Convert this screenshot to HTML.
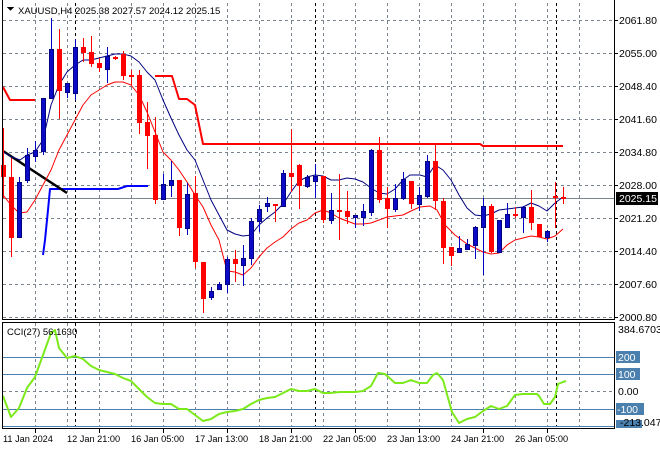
<!DOCTYPE html>
<html><head><meta charset="utf-8"><style>
html,body{margin:0;padding:0;background:#fff;width:660px;height:450px;overflow:hidden}
svg{display:block}
text{font-family:"Liberation Sans",sans-serif;font-size:10.5px;fill:#000}
.s{font-size:9.5px}
.t{font-size:9.2px}
</style></head><body>
<svg width="660" height="450" viewBox="0 0 660 450" xmlns="http://www.w3.org/2000/svg" shape-rendering="crispEdges">
<rect width="660" height="450" fill="#fff"/>
<g stroke="#7a8591" stroke-width="1" stroke-dasharray="3,3">
<path d="M3 20.5H614M3 53.5H614M3 86.5H614M3 119.5H614M3 152.5H614M3 185.5H614M3 218.5H614M3 251.5H614M3 284.5H614M3 317.5H614M3 391.5H614"/>
<path d="M35.5 3V319M67.5 3V319M99.5 3V319M131.5 3V319M163.5 3V319M195.5 3V319M227.5 3V319M259.5 3V319M291.5 3V319M323.5 3V319M355.5 3V319M387.5 3V319M419.5 3V319M451.5 3V319M483.5 3V319M515.5 3V319M547.5 3V319M579.5 3V319"/>
<path d="M35.5 323V427M67.5 323V427M99.5 323V427M131.5 323V427M163.5 323V427M195.5 323V427M227.5 323V427M259.5 323V427M291.5 323V427M323.5 323V427M355.5 323V427M387.5 323V427M419.5 323V427M451.5 323V427M483.5 323V427M515.5 323V427M547.5 323V427M579.5 323V427"/>
</g>
<g stroke="#000" stroke-width="1" stroke-dasharray="3,3">
<path d="M75.5 3V319M315.5 3V319M556.5 3V319M75.5 323V427M315.5 323V427M556.5 323V427"/>
</g>
<path d="M3 198.5H614" stroke="#7a8591"/>
<g stroke="#4a7fae" stroke-width="1">
<path d="M3 357.5H614M3 374.5H614M3 409.5H614M3 426.5H614"/>
</g>
<g shape-rendering="auto" fill="none" stroke-linejoin="round">
<polyline points="3,87 10,100 35,100" stroke="#f00" stroke-width="2"/>
<polyline points="155,76 172,76 179,99 187,99 195,105 203,144 480,144 483,146 563,146" stroke="#f00" stroke-width="2"/>
<polyline points="43,255 45,240 48,210 50,189 118,189 127,186 148,186" stroke="#00f" stroke-width="2"/>
<polyline points="3,151 67,193" stroke="#000" stroke-width="2.5"/>
<polyline stroke="#000080" stroke-width="1" points="3,152 12,157 20,160 27,155 35,152 43,140 51,105 59,85 67,72 75,65 83,60 91,60 99,58 107,56 115,54 123,54 131,56 139,62 147,72 155,80 163,100 171,118 179,135 187,150 195,160 203,180 211,200 219,215 227,230 235,234 243,236 251,235 259,225 267,218 275,212 283,204 291,192 299,181 307,177 315,175 323,176 331,180 339,180 347,178 355,179 363,182 371,188 379,193 387,194 395,189 403,180 410,175 420,175 427,177 435,165 443,170 451,180 459,195 467,208 475,215 483,216 491,214 499,210 507,209 515,208 523,207 531,203 539,206 547,211 555,203 563,197"/>
<polyline stroke="#f00" stroke-width="1" points="3,195 11,205 19,213 27,212 35,200 43,185 51,170 59,150 67,135 75,120 83,105 91,95 99,90 107,85 115,82 123,82 131,85 139,95 147,112 155,132 163,152 171,160 179,170 187,182 195,195 203,207 211,225 219,240 227,271 235,272 243,275 251,268 259,257 267,248 275,242 283,237 291,229 299,223 307,220 315,213 323,210 331,213 339,218 347,221 355,224 363,224 371,223 379,220 387,217 395,216 403,215 411,211 420,207 430,206 437,210 445,225 455,235 467,244 475,248 483,252 491,254 499,253 507,245 515,240 523,238 531,236 539,237 547,239 555,236 563,229"/>
<polyline stroke="#7cea1a" stroke-width="2" points="3,396 11,417 19,408 27,388 35,377 43,355 51,333 55,330 59,348 67,358 75,356 83,359 91,366 99,370 107,372 115,374 123,378 131,381 139,389 147,397 155,403 163,404 171,404 179,409 187,409 195,415 203,421 211,419 219,414 227,412 235,411 243,409 251,404 259,400 267,398 275,397 283,393 291,389 299,391 307,391 315,389 323,393 330,393 340,392 355,392 363,391 371,386 378,373 385,374 395,383 403,383 411,380 419,383 427,383 433,375 437,373 443,380 448,398 452,412 459,423 467,419 475,417 483,411 491,406 499,409 507,406 515,395 523,394 537,394 539,396 544,404 550,404 555,397 558,384 563,382 566,381"/>
</g>
<path stroke="#f00" stroke-width="1" d="M3.5 128V198M11.5 158V257M59.5 29V119M83.5 38V62M91.5 36V67M99.5 58V72M115.5 56V60M123.5 51V80M131.5 70V85M139.5 70V134M147.5 102V169M155.5 117V204M179.5 180V236M195.5 176V268M203.5 262V313M235.5 250V282M275.5 204V222M291.5 129V192M299.5 164V209M323.5 176V223M339.5 174V240M347.5 191V224M379.5 137V203M387.5 187V228M411.5 181V209M435.5 144V210M443.5 198V264M451.5 247V266M491.5 204V253M515.5 207V218M531.5 190V230M539.5 224V237M555.5 182V228M563.5 187V204"/>
<path stroke="#0000c8" stroke-width="1" d="M19.5 177V238M27.5 148V183M35.5 141V162M43.5 98V155M51.5 18V98M67.5 83V98M75.5 39V100M107.5 47V83M163.5 174V199M171.5 161V197M187.5 183V235M211.5 287V300M219.5 282V290M227.5 257V293M243.5 245V286M251.5 218V265M259.5 205V232M267.5 197V212M283.5 170V206M307.5 175V188M315.5 164V198M331.5 193V224M355.5 215V228M363.5 204V226M371.5 149V216M395.5 184V212M403.5 172V200M419.5 187V211M427.5 155V198M459.5 236V253M467.5 239V250M475.5 226V259M483.5 198V275M499.5 220V252M507.5 203V228M523.5 206V233M547.5 230V242"/>
<g fill="#f00">
<rect x="1" y="165" width="5" height="12"/><rect x="9" y="177" width="5" height="61"/><rect x="57" y="49" width="5" height="42"/><rect x="81" y="47" width="5" height="6"/><rect x="89" y="52" width="5" height="12"/><rect x="97" y="63" width="5" height="5"/><rect x="113" y="57" width="5" height="2"/><rect x="121" y="54" width="5" height="22"/><rect x="129" y="75" width="5" height="2"/><rect x="137" y="75" width="5" height="48"/><rect x="145" y="122" width="5" height="14"/><rect x="153" y="135" width="5" height="65"/><rect x="177" y="180" width="5" height="48"/><rect x="193" y="193" width="5" height="69"/><rect x="201" y="262" width="5" height="37"/><rect x="233" y="259" width="5" height="5"/><rect x="273" y="204" width="5" height="2"/><rect x="289" y="173" width="5" height="4"/><rect x="297" y="165" width="5" height="21"/><rect x="321" y="176" width="5" height="44"/><rect x="337" y="210" width="5" height="2"/><rect x="345" y="211" width="5" height="6"/><rect x="377" y="150" width="5" height="50"/><rect x="385" y="198" width="5" height="11"/><rect x="409" y="181" width="5" height="23"/><rect x="433" y="161" width="5" height="40"/><rect x="441" y="201" width="5" height="47"/><rect x="449" y="247" width="5" height="9"/><rect x="489" y="206" width="5" height="46"/><rect x="513" y="214" width="5" height="2"/><rect x="529" y="207" width="5" height="16"/><rect x="537" y="224" width="5" height="13"/><rect x="553" y="196" width="5" height="2"/><rect x="561" y="197" width="5" height="2"/>
</g>
<g fill="#0a0ac8" stroke="#000080" stroke-width="1">
<rect x="17.5" y="182.5" width="4" height="55"/><rect x="25.5" y="155.5" width="4" height="25"/><rect x="33.5" y="150.5" width="4" height="6"/><rect x="41.5" y="98.5" width="4" height="53"/><rect x="49.5" y="49.5" width="4" height="49"/><rect x="65.5" y="83.5" width="4" height="9"/><rect x="73.5" y="47.5" width="4" height="46"/><rect x="105.5" y="56.5" width="4" height="13"/><rect x="161.5" y="184.5" width="4" height="15"/><rect x="169.5" y="180.5" width="4" height="5"/><rect x="185.5" y="194.5" width="4" height="34"/><rect x="209.5" y="291.5" width="4" height="6"/><rect x="217.5" y="284.5" width="4" height="5"/><rect x="225.5" y="259.5" width="4" height="25"/><rect x="241.5" y="258.5" width="4" height="7"/><rect x="249.5" y="221.5" width="4" height="37"/><rect x="257.5" y="209.5" width="4" height="12"/><rect x="265.5" y="203.5" width="4" height="3"/><rect x="281.5" y="173.5" width="4" height="33"/><rect x="305.5" y="177.5" width="4" height="9"/><rect x="313.5" y="176.5" width="4" height="5"/><rect x="329.5" y="210.5" width="4" height="10"/><rect x="353.5" y="215.5" width="4" height="2"/><rect x="361.5" y="211.5" width="4" height="6"/><rect x="369.5" y="150.5" width="4" height="62"/><rect x="393.5" y="198.5" width="4" height="11"/><rect x="401.5" y="179.5" width="4" height="19"/><rect x="417.5" y="195.5" width="4" height="9"/><rect x="425.5" y="161.5" width="4" height="35"/><rect x="457.5" y="248.5" width="4" height="4"/><rect x="465.5" y="244.5" width="4" height="5"/><rect x="473.5" y="227.5" width="4" height="18"/><rect x="481.5" y="206.5" width="4" height="21"/><rect x="497.5" y="220.5" width="4" height="32"/><rect x="505.5" y="214.5" width="4" height="13"/><rect x="521.5" y="207.5" width="4" height="10"/><rect x="545.5" y="231.5" width="4" height="6"/>
</g>
<g stroke="#000" stroke-width="1" fill="none">
<path d="M2.5 0V319.5H614.5V0"/>
<path d="M2.5 322.5H614.5V428.5H2.5Z"/>
</g>
<path stroke="#000" d="M614 20.5h4M614 53.5h4M614 86.5h4M614 119.5h4M614 152.5h4M614 185.5h4M614 218.5h4M614 251.5h4M614 284.5h4M614 317.5h4M35.5 429v4M99.5 429v4M163.5 429v4M227.5 429v4M291.5 429v4M355.5 429v4M419.5 429v4M483.5 429v4M547.5 429v4"/>
<path d="M7 7h7l-3.5 4z" fill="#000"/>
<text class="s" x="18" y="14">XAUUSD,H4  2025.38 2027.57 2024.12 2025.15</text>
<text class="s" x="7" y="335">CCI(27) 56.1630</text>
<g>
<text x="619" y="24">2061.80</text><text x="619" y="57">2055.00</text><text x="619" y="90">2048.40</text><text x="619" y="123">2041.60</text><text x="619" y="156">2034.80</text><text x="619" y="189">2028.00</text><text x="619" y="222">2021.20</text><text x="619" y="255">2014.40</text><text x="619" y="288">2007.60</text><text x="619" y="321">2000.80</text>
</g>
<rect x="616" y="192" width="42" height="13" fill="#000"/>
<text x="619" y="202" style="fill:#fff">2025.15</text>
<text x="618" y="333">384.6703</text>
<rect x="616" y="351" width="24" height="12" fill="#4a7fae"/><text x="618" y="361" style="fill:#fff">200</text>
<rect x="616" y="368" width="24" height="12" fill="#4a7fae"/><text x="618" y="378" style="fill:#fff">100</text>
<text x="618" y="395">0.00</text>
<rect x="616" y="403" width="28" height="12" fill="#4a7fae"/><text x="617" y="413" style="fill:#fff">-100</text>
<rect x="616" y="420" width="26" height="8" fill="#4a7fae"/>
<text x="620" y="426">-213.0477</text>
<g class="t">
<text class="t" x="3" y="442">11 Jan 2024</text><text class="t" x="67" y="442">12 Jan 21:00</text><text class="t" x="131" y="442">16 Jan 05:00</text><text class="t" x="195" y="442">17 Jan 13:00</text><text class="t" x="259" y="442">18 Jan 21:00</text><text class="t" x="323" y="442">22 Jan 05:00</text><text class="t" x="387" y="442">23 Jan 13:00</text><text class="t" x="451" y="442">24 Jan 21:00</text><text class="t" x="515" y="442">26 Jan 05:00</text>
</g>
</svg>
</body></html>
